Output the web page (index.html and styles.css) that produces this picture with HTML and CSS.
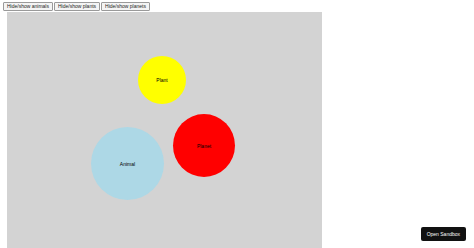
FILE: index.html
```html
<!DOCTYPE html>
<html>
<head>
    <meta charset="utf-8" />
    <title>Bubbles</title>
    <link rel="stylesheet" href="styles.css">
</head>
<body>

<div class="toolbar">
    <button class="btn">Hide/show animals</button>
    <button class="btn">Hide/show plants</button>
    <button class="btn">Hide/show planets</button>
</div>

<div class="board">
    <div class="bubble bubble-plant">Plant</div>
    <div class="bubble bubble-planet">Planet</div>
    <div class="bubble bubble-animal">Animal</div>
</div>

<a href="#" class="sandbox">Open Sandbox</a>

</body>
</html>
```

FILE: styles.css
```css
body{
    margin: 0px;padding: 0px;
    font-family: "Liberation Sans", Arial, sans-serif;
    background: #fff;
    overflow: hidden;
}

/*按钮栏*/
.toolbar{
    display: flex;
    padding: 2px 0px 0px 3px;
    height: 10px;
}
.btn{
    height: 9px;
    margin: 0px 1px 0px 0px;padding: 0px 3px;
    font-family: "Liberation Sans", Arial, sans-serif;
    font-size: 5px;line-height: 7px;color: #222;
    background: #f4f4f4;
    border: 1px solid #9a9a9a;border-radius: 1px;
}

/*画布区域*/
.board{
    position: relative;
    width: 315px;height: 240px;
    margin: 0px 0px 0px 7px;
    background: #d3d3d3;
}

.bubble{
    position: absolute;
    display: flex;align-items: center;justify-content: center;
    border-radius: 50%;
    font-size: 5px;color: #000;
}
.bubble-plant{
    left: 131px;top: 44px;
    width: 48px;height: 48px;
    background: #ffff00;
}
.bubble-planet{
    left: 166px;top: 102px;
    width: 62px;height: 63px;
    background: #ff0000;
}
.bubble-animal{
    left: 84px;top: 115px;
    width: 73px;height: 73px;
    background: #add8e6;
}

/*右下角按钮*/
.sandbox{
    position: absolute;right: 8px;bottom: 7px;
    padding: 0px 6px;
    height: 14px;line-height: 14px;
    background: #111;color: #fff;
    border-radius: 2px;
    font-size: 5px;
    text-decoration: none;
}
```
